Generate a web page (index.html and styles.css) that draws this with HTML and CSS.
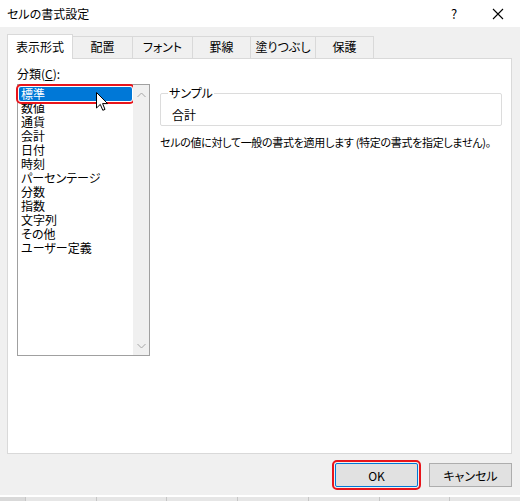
FILE: index.html
```html
<!DOCTYPE html>
<html lang="ja">
<head>
    <meta charset="UTF-8">
    <title>セルの書式設定</title>
    <link rel="stylesheet" href="styles.css">
</head>
<body>

<!-- タイトルバー -->
<div class="titlebar">
    <div class="title">セルの書式設定</div>
    <div class="title-btn">?</div>
    <div class="title-btn close">
        <svg width="12" height="12" viewBox="0 0 12 12"><path d="M1 1 L11 11 M11 1 L1 11" stroke="#000" stroke-width="1.1" fill="none"/></svg>
    </div>
</div>

<div class="dialog">
    <!-- タブ -->
    <div class="tabs">
        <div class="tab active">表示形式</div>
        <div class="tab w60">配置</div>
        <div class="tab w60">フォント</div>
        <div class="tab w58">罫線</div>
        <div class="tab w65">塗りつぶし</div>
        <div class="tab w58">保護</div>
    </div>

    <div class="panel">
        <div class="col-left">
            <div class="label">分類(<u>C</u>):</div>
            <div class="listbox">
                <ul class="items">
                    <li class="selected">標準</li>
                    <li>数値</li>
                    <li>通貨</li>
                    <li>会計</li>
                    <li>日付</li>
                    <li>時刻</li>
                    <li>パーセンテージ</li>
                    <li>分数</li>
                    <li>指数</li>
                    <li>文字列</li>
                    <li>その他</li>
                    <li>ユーザー定義</li>
                </ul>
                <div class="scrollbar">
                    <svg width="9" height="6" viewBox="0 0 9 6"><path d="M0.5 5 L4.5 1 L8.5 5" stroke="#a6a6a6" fill="none"/></svg>
                    <svg width="9" height="6" viewBox="0 0 9 6"><path d="M0.5 1 L4.5 5 L8.5 1" stroke="#a6a6a6" fill="none"/></svg>
                </div>
            </div>
        </div>

        <div class="col-right">
            <fieldset class="sample">
                <legend>サンプル</legend>
                <div class="sample-value">合計</div>
            </fieldset>
            <p class="desc">セルの値に対して一般の書式を適用します (特定の書式を指定しません)。</p>
        </div>
    </div>

    <!-- ボタン -->
    <div class="buttons">
        <button class="btn default">OK</button>
        <button class="btn">キャンセル</button>
    </div>
</div>

<!-- 後ろのシート -->
<div class="sheet">
    <div class="cell first"></div>
    <div class="cell"></div>
    <div class="cell"></div>
    <div class="cell"></div>
    <div class="cell"></div>
    <div class="cell"></div>
    <div class="cell"></div>
    <div class="cell"></div>
</div>

<!-- マウスカーソル -->
<svg class="cursor" width="13" height="20" viewBox="0 0 13 20">
    <path d="M0.5 0.5 L0.5 16 L4.3 12.4 L6.8 18.3 L9 17.4 L6.6 11.6 L11.6 11.6 Z" fill="#fff" stroke="#000" stroke-width="1" stroke-linejoin="miter"/>
</svg>

</body>
</html>
```

FILE: styles.css
```css
* {
    margin: 0;
    padding: 0;
    box-sizing: border-box;
}

html, body {
    width: 520px;
    height: 501px;
    overflow: hidden;
}

body {
    position: relative;
    font-family: "Noto Sans CJK JP", sans-serif;
    font-size: 12px;
    font-feature-settings: "palt";
    color: #000;
    background-color: #f0f0f0;
}

/* タイトルバー */
.titlebar {
    height: 27px;
    background: #fff;
    display: flex;
    align-items: center;
    padding-left: 7px;
}

.title {
    flex: 1;
}

.title-btn {
    width: 44px;
    text-align: center;
    font-size: 13px;
}

.title-btn svg {
    display: block;
    margin: 0 auto;
}

/* ダイアログ本体 */
.dialog {
    height: 468px;
    padding: 7px 8px 0 7px;
    display: flex;
    flex-direction: column;
}

.tabs {
    display: flex;
    align-items: flex-end;
    height: 24px;
    position: relative;
    z-index: 1;
}

.tab {
    height: 22px;
    line-height: 20px;
    text-align: center;
    border: 1px solid #d9d9d9;
    border-bottom: none;
    margin-left: -1px;
    background: #f0f0f0;
}

.tab.active {
    width: 66px;
    height: 25px;
    margin-left: 0;
    margin-bottom: -1px;
    line-height: 24px;
    background: #fff;
}

.w58 { width: 59px; }
.w60 { width: 61px; }
.w65 { width: 66px; }

.panel {
    height: 396px;
    background: #fff;
    border: 1px solid #d9d9d9;
    padding: 8px 9px 0 9px;
    display: flex;
}

.col-left {
    width: 133px;
    flex-shrink: 0;
}

.label {
    height: 14px;
    line-height: 14px;
    margin-bottom: 3px;
}

.label u {
    text-underline-offset: 1px;
}

.listbox {
    height: 272px;
    border: 1px solid #a0a0a0;
    display: flex;
}

.items {
    flex: 1;
    list-style: none;
    padding: 2px 1px 0 1px;
}

.items li {
    height: 14px;
    line-height: 14px;
    padding-left: 2px;
    white-space: nowrap;
}

.items li.selected {
    background: #0078d7;
    color: #fff;
    outline: 2px solid #e8141b;
    outline-offset: 1px;
    border-radius: 2px;
}

.scrollbar {
    width: 16px;
    background: #f0f0f0;
    display: flex;
    flex-direction: column;
    justify-content: space-between;
    align-items: center;
    padding: 7px 0 6px;
}

.scrollbar svg {
    display: block;
}

.col-right {
    flex: 1;
    min-width: 0;
    margin-left: 10px;
    padding-top: 19px;
}

.sample {
    height: 40px;
    border: 1px solid #dcdcdc;
    border-radius: 2px;
    padding: 0 0 0 11px;
}

.sample legend {
    margin-left: -4px;
    padding: 0 1px;
    line-height: 14px;
}

.sample-value {
    line-height: 14px;
    margin-top: 8px;
}

.desc {
    margin-top: 9px;
    line-height: 14px;
    font-size: 11px;
    white-space: nowrap;
    letter-spacing: -0.3px;
}

/* ボタン */
.buttons {
    display: flex;
    justify-content: flex-end;
    gap: 11px;
    margin-top: 9px;
}

.btn {
    width: 83px;
    height: 24px;
    font-family: inherit;
    font-size: 12px;
    font-feature-settings: "palt";
    background: #e1e1e1;
    border: 1px solid #adadad;
    color: #000;
}

.btn.default {
    border-color: #0078d7;
    outline: 2px solid #e8141b;
    outline-offset: 1px;
    border-radius: 2px;
}

/* 後ろのシート */
.sheet {
    height: 6px;
    border-top: 2px solid #fff;
    display: flex;
}

.cell {
    width: 71px;
    background: #e6e6e6;
    border-left: 1px solid #c6c6c6;
}

.cell.first {
    width: 25px;
    border-left: none;
    background: #d9d9d9;
}

.cursor {
    position: absolute;
    left: 96px;
    top: 92px;
}
```
